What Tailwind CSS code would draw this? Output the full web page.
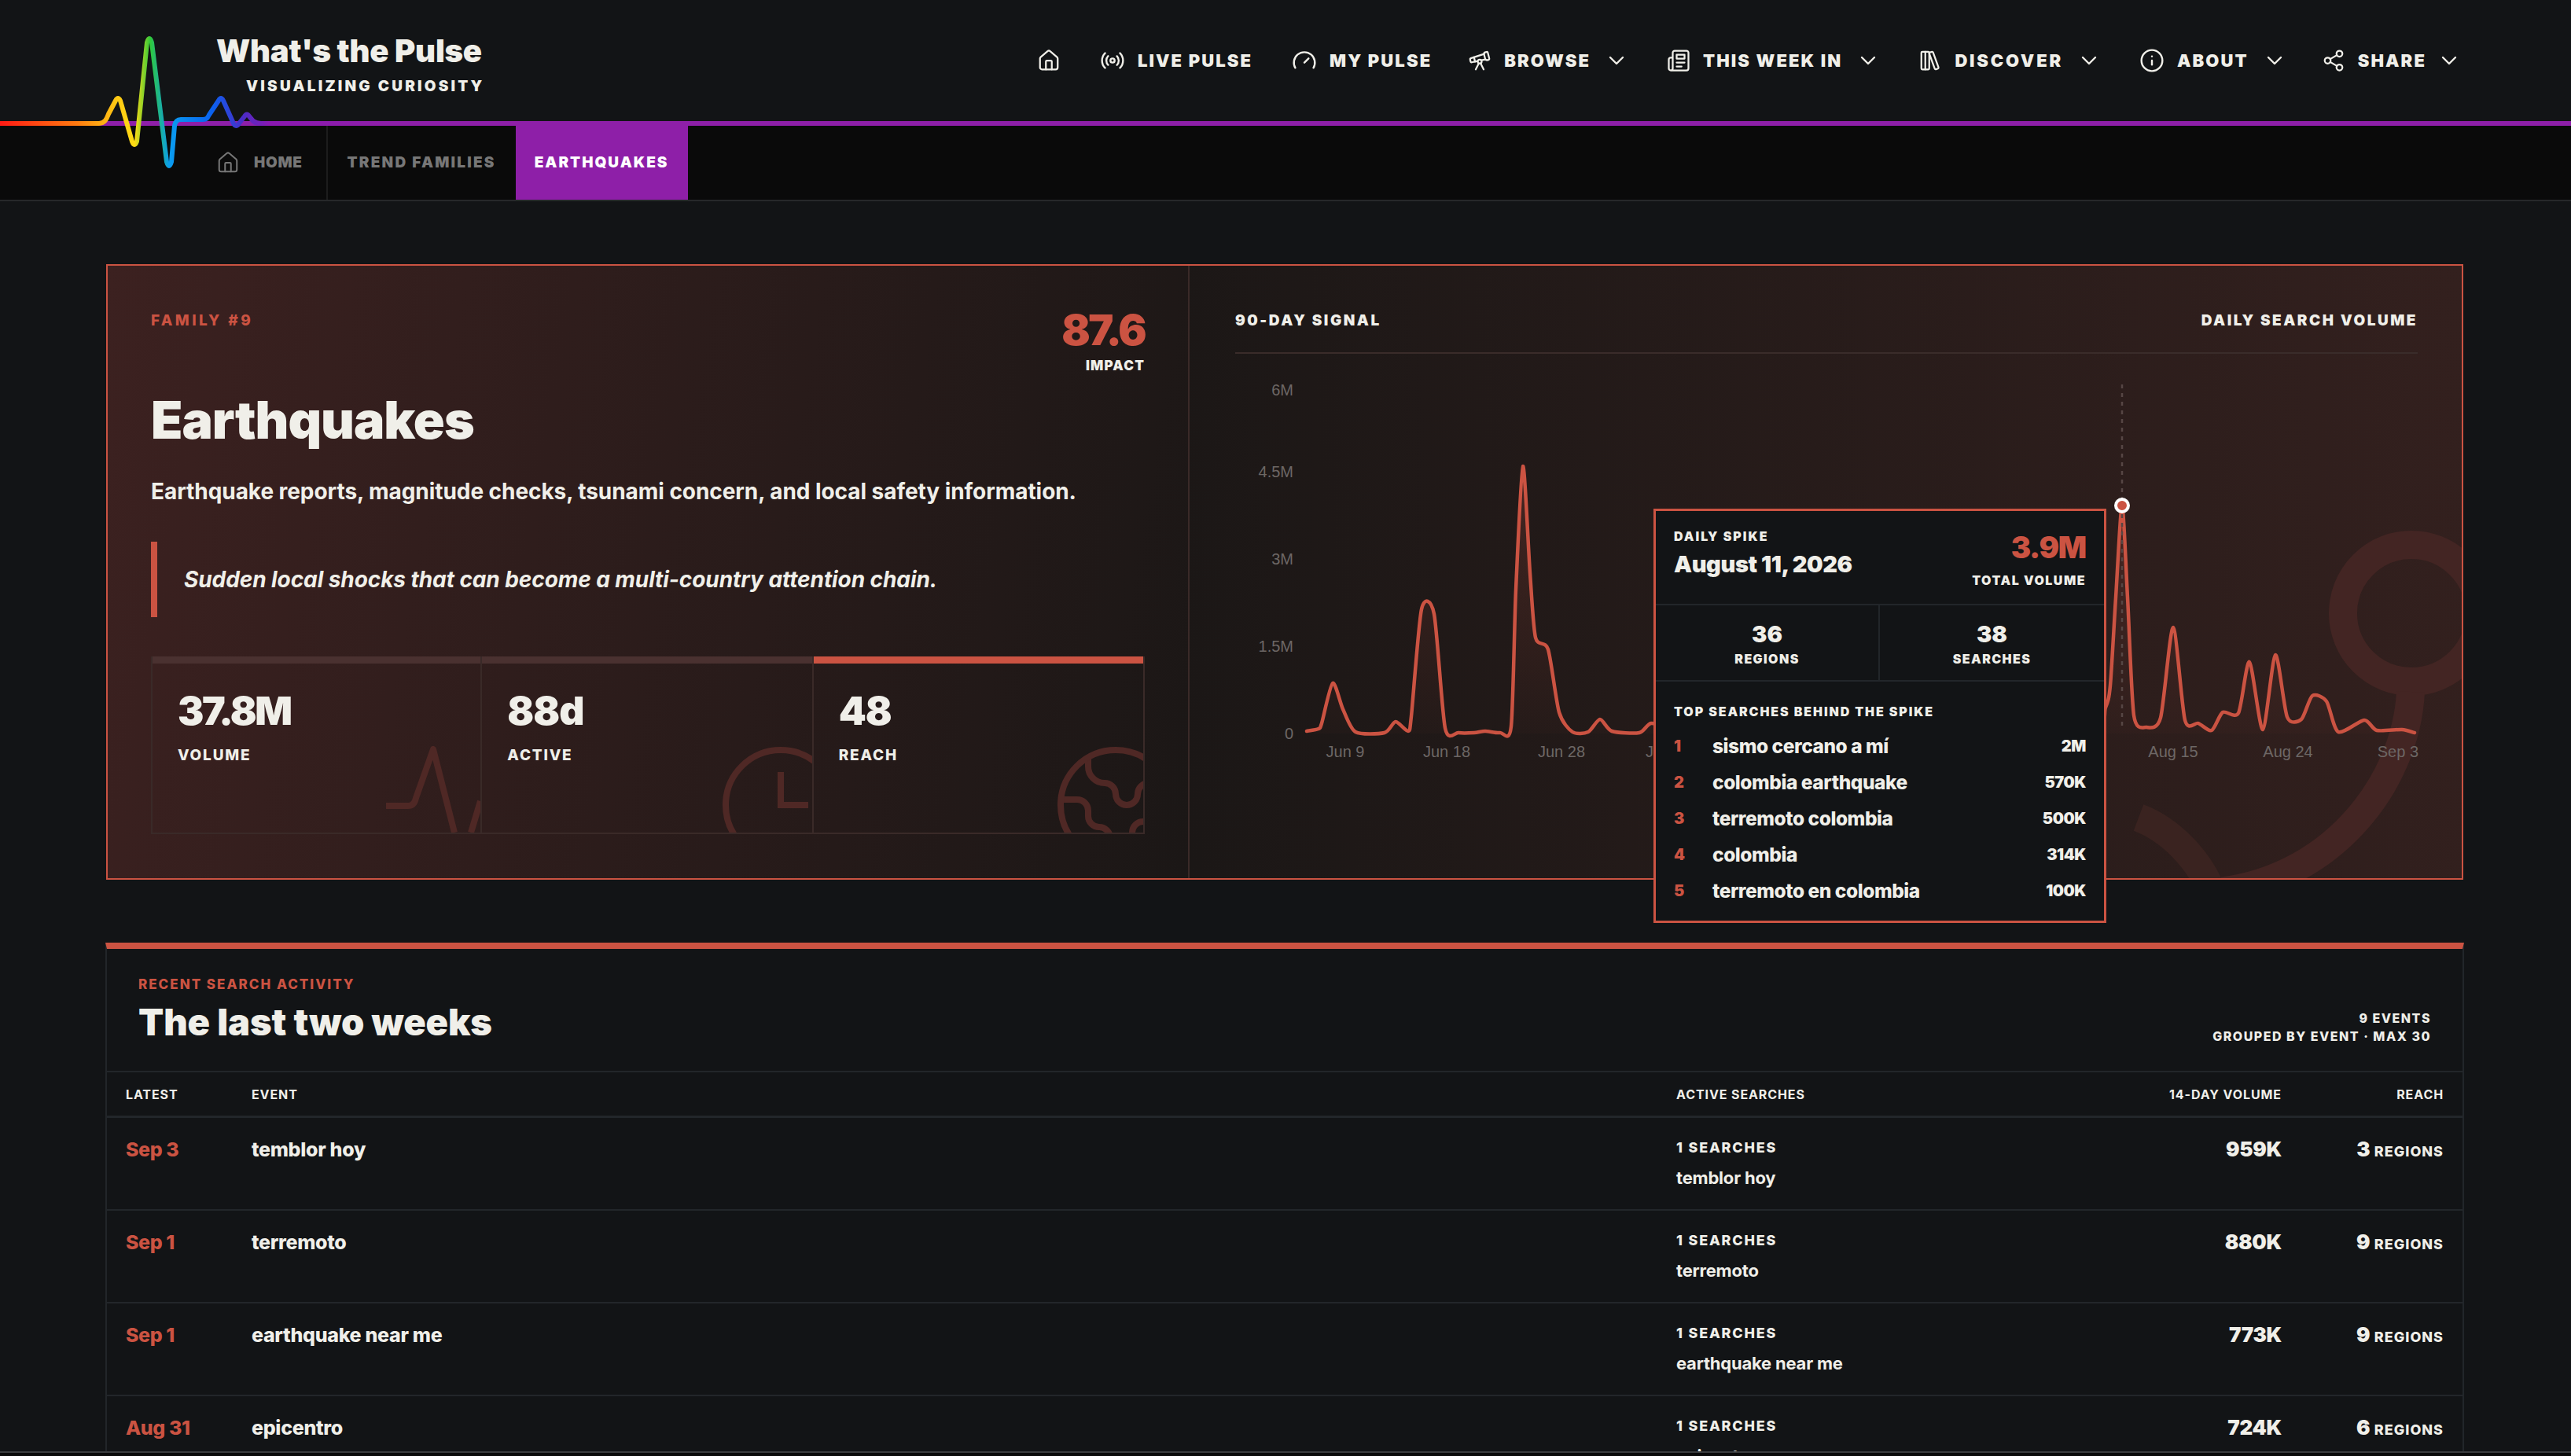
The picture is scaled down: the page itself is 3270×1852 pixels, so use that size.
<!DOCTYPE html>
<html lang="en">
<head>
    <meta charset="UTF-8">
    <meta name="viewport" content="width=device-width, initial-scale=1.0">
    <title>Earthquakes - What's the Pulse</title>
    <script src="https://cdn.jsdelivr.net/npm/@tailwindcss/browser@4"></script>
</head>
<body class="bg-[#121416] text-[#f0efe9] font-['Inter',sans-serif]">
<div class="relative w-[3270px] h-[1852px] overflow-hidden">

    <!-- top nav -->
    <header class="h-[154px] flex justify-between">
        <div class="pl-[275px] pt-[41px]">
            <div class="text-[40px] leading-[48px] font-black tracking-[-0.2px]">What's the Pulse</div>
            <div class="pl-[38px] mt-[9px] text-[19px] leading-[24px] font-black tracking-[3.2px]">VISUALIZING CURIOSITY</div>
        </div>
        <nav class="flex items-center gap-[50px] pr-[139px] text-[22px] font-black tracking-[2.1px]">
            <svg class="w-[30px] h-[30px]" viewBox="0 0 24 24" fill="none" stroke="currentColor" stroke-width="1.8" stroke-linecap="round" stroke-linejoin="round"><path d="M15 21v-8a1 1 0 0 0-1-1h-4a1 1 0 0 0-1 1v8"/><path d="M3 10a2 2 0 0 1 .709-1.528l7-5.999a2 2 0 0 1 2.582 0l7 5.999A2 2 0 0 1 21 10v9a2 2 0 0 1-2 2H5a2 2 0 0 1-2-2z"/></svg>
            <a class="flex items-center gap-[16px]">
                <svg class="w-[32px] h-[32px]" viewBox="0 0 24 24" fill="none" stroke="currentColor" stroke-width="1.8" stroke-linecap="round" stroke-linejoin="round"><path d="M4.9 19.1C1 15.2 1 8.8 4.9 4.9"/><path d="M7.8 16.2c-2.3-2.3-2.3-6.1 0-8.5"/><circle cx="12" cy="12" r="2"/><path d="M16.2 7.8c2.3 2.3 2.3 6.1 0 8.5"/><path d="M19.1 4.9C23 8.8 23 15.1 19.1 19"/></svg>
                LIVE PULSE
            </a>
            <a class="flex items-center gap-[16px] -mr-[4px]">
                <svg class="w-[32px] h-[32px]" viewBox="0 0 24 24" fill="none" stroke="currentColor" stroke-width="1.8" stroke-linecap="round" stroke-linejoin="round"><path d="m12 14 4-4"/><path d="M3.34 19a10 10 0 1 1 17.32 0"/></svg>
                MY PULSE
            </a>
            <a class="flex items-center gap-[16px] -mr-[2px]">
                <svg class="w-[30px] h-[30px]" viewBox="0 0 24 24" fill="none" stroke="currentColor" stroke-width="1.8" stroke-linecap="round" stroke-linejoin="round"><path d="m10.065 12.493-6.18 1.318a.934.934 0 0 1-1.108-.702l-.537-2.15a1.07 1.07 0 0 1 .691-1.265l13.504-4.44"/><path d="m13.56 11.747 4.332-.924"/><path d="m16 21-3.105-6.21"/><path d="M16.485 5.94a2 2 0 0 1 1.455-2.425l1.09-.272a1 1 0 0 1 1.212.727l1.515 6.06a1 1 0 0 1-.727 1.213l-1.09.272a2 2 0 0 1-2.425-1.455z"/><path d="m6.158 8.633 1.114 4.456"/><path d="m8 21 3.105-6.21"/><circle cx="12" cy="13" r="2"/></svg>
                BROWSE
                <svg class="ml-[1px] w-[32px] h-[32px]" viewBox="0 0 24 24" fill="none" stroke="currentColor" stroke-width="1.8" stroke-linecap="round" stroke-linejoin="round"><path d="m6 9 6 6 6-6"/></svg>
            </a>
            <a class="flex items-center gap-[16px] -mr-[2px]">
                <svg class="w-[30px] h-[30px]" viewBox="0 0 24 24" fill="none" stroke="currentColor" stroke-width="1.8" stroke-linecap="round" stroke-linejoin="round"><path d="M4 22h16a2 2 0 0 0 2-2V4a2 2 0 0 0-2-2H8a2 2 0 0 0-2 2v16a2 2 0 0 1-2 2Zm0 0a2 2 0 0 1-2-2v-9c0-1.1.9-2 2-2h2"/><path d="M18 14h-8"/><path d="M15 18h-5"/><path d="M10 6h8v4h-8V6Z"/></svg>
                THIS WEEK IN
                <svg class="ml-[1px] w-[32px] h-[32px]" viewBox="0 0 24 24" fill="none" stroke="currentColor" stroke-width="1.8" stroke-linecap="round" stroke-linejoin="round"><path d="m6 9 6 6 6-6"/></svg>
            </a>
            <a class="flex items-center gap-[16px] -mr-[2px]">
                <svg class="w-[30px] h-[30px]" viewBox="0 0 24 24" fill="none" stroke="currentColor" stroke-width="1.8" stroke-linecap="round" stroke-linejoin="round"><rect width="8" height="18" x="3" y="3" rx="1"/><path d="M7 3v18"/><path d="M20.4 18.9c.2.5-.1 1.1-.6 1.3l-1.9.7c-.5.2-1.1-.1-1.3-.6L11.1 5.1c-.2-.5.1-1.1.6-1.3l1.9-.7c.5-.2 1.1.1 1.3.6Z"/></svg>
                <span class="tracking-[2.8px]">DISCOVER</span>
                <svg class="ml-[1px] w-[32px] h-[32px]" viewBox="0 0 24 24" fill="none" stroke="currentColor" stroke-width="1.8" stroke-linecap="round" stroke-linejoin="round"><path d="m6 9 6 6 6-6"/></svg>
            </a>
            <a class="flex items-center gap-[16px] -mr-[6px]">
                <svg class="w-[32px] h-[32px]" viewBox="0 0 24 24" fill="none" stroke="currentColor" stroke-width="1.8" stroke-linecap="round" stroke-linejoin="round"><circle cx="12" cy="12" r="10"/><path d="M12 16v-4"/><path d="M12 8h.01"/></svg>
                ABOUT
                <svg class="ml-[1px] w-[32px] h-[32px]" viewBox="0 0 24 24" fill="none" stroke="currentColor" stroke-width="1.8" stroke-linecap="round" stroke-linejoin="round"><path d="m6 9 6 6 6-6"/></svg>
            </a>
            <a class="flex items-center gap-[16px]">
                <svg class="w-[30px] h-[30px]" viewBox="0 0 24 24" fill="none" stroke="currentColor" stroke-width="1.8" stroke-linecap="round" stroke-linejoin="round"><circle cx="18" cy="5" r="3"/><circle cx="6" cy="12" r="3"/><circle cx="18" cy="19" r="3"/><path d="m8.59 13.51 6.83 3.98"/><path d="m15.41 6.51-6.82 3.98"/></svg>
                SHARE
                <svg class="-ml-[3px] w-[32px] h-[32px]" viewBox="0 0 24 24" fill="none" stroke="currentColor" stroke-width="1.8" stroke-linecap="round" stroke-linejoin="round"><path d="m6 9 6 6 6-6"/></svg>
            </a>
        </nav>
    </header>
    <div class="h-[6px] bg-[#8e1fa8]"></div>

    <!-- breadcrumbs -->
    <div class="h-[96px] bg-[#0a0a0a] border-b-2 border-[#26282a] flex pl-[275px] text-[19px] font-black tracking-[2px]">
        <a class="flex items-center gap-[18px] pr-[30px] text-[#777] tracking-[0.7px] border-r-2 border-[#1c1c1c]">
            <svg class="w-[30px] h-[30px]" viewBox="0 0 24 24" fill="none" stroke="currentColor" stroke-width="1.6" stroke-linecap="round" stroke-linejoin="round"><path d="M15 21v-8a1 1 0 0 0-1-1h-4a1 1 0 0 0-1 1v8"/><path d="M3 10a2 2 0 0 1 .709-1.528l7-5.999a2 2 0 0 1 2.582 0l7 5.999A2 2 0 0 1 21 10v9a2 2 0 0 1-2 2H5a2 2 0 0 1-2-2z"/></svg>
            HOME
        </a>
        <a class="flex items-center px-[25px] text-[#777] tracking-[2.2px]">TREND FAMILIES</a>
        <a class="flex items-center px-[24px] bg-[#8e1fa8] text-white h-[94px]">EARTHQUAKES</a>
    </div>

    <!-- hero panel -->
    <section class="mt-[80px] ml-[135px] w-[2998px] h-[783px] border-2 border-[#cb5342] flex">
        <div class="relative w-[1376px] px-[55px] pt-[58px] border-r-2 border-[#3a2a28] bg-[linear-gradient(100deg,#3c2120,#1b1716)]">
            <div class="flex justify-between">
                <div class="text-[19px] leading-[24px] font-extrabold tracking-[3.4px] text-[#cb5342]">FAMILY #9</div>
                <div class="text-right">
                    <div class="text-[54px] leading-[48px] font-black tracking-[-2.8px] text-[#cb5342]">87.6</div>
                    <div class="mt-[10px] text-[17px] leading-[22px] font-black tracking-[1.2px]">IMPACT</div>
                </div>
            </div>
            <h1 class="mt-[18px] text-[66px] leading-[80px] font-black tracking-[-1px]">Earthquakes</h1>
            <p class="mt-[33px] text-[28px] leading-[36px] font-bold tracking-[-0.06px]">Earthquake reports, magnitude checks, tsunami concern, and local safety information.</p>
            <blockquote class="mt-[46px] h-[96px] border-l-8 border-[#cb5342] pl-[34px] flex items-center text-[28px] font-bold italic tracking-[-0.08px]">Sudden local shocks that can become a multi-country attention chain.</blockquote>
            <div class="mt-[50px] grid grid-cols-3 h-[226px] border-b-2 border-[#3a2a28]">
                <div class="relative overflow-hidden border-x-2 border-[#3a2a28]">
                    <div class="h-[9px] bg-[#4a3130]"></div>
                    <div class="pl-[32px] pt-[32px] text-[50px] leading-[56px] font-black tracking-[-2.4px]">37.8M</div>
                    <div class="pl-[32px] mt-[17px] text-[19px] leading-[24px] font-extrabold tracking-[1.8px]">VOLUME</div>
                    <svg class="absolute right-0 bottom-0 w-[120px] h-[110px]" viewBox="0 0 120 110" fill="none" stroke="#4f2825" stroke-width="8" stroke-linejoin="round"><path d="M0 76H28Q36 76 38 66L60 4L87 110M108 110L120 70"/></svg>
                </div>
                <div class="relative overflow-hidden border-r-2 border-[#3a2a28]">
                    <div class="h-[9px] bg-[#4a3130]"></div>
                    <div class="pl-[32px] pt-[32px] text-[50px] leading-[56px] font-black tracking-[-1px]">88d</div>
                    <div class="pl-[32px] mt-[17px] text-[19px] leading-[24px] font-extrabold tracking-[1.8px]">ACTIVE</div>
                    <svg class="absolute left-[296px] top-[105px] w-[168px] h-[168px]" viewBox="0 0 24 24" fill="none" stroke="#4f2825" stroke-width="1.15"><circle cx="12" cy="12" r="10"/><path d="M12 6v6h5"/></svg>
                </div>
                <div class="relative overflow-hidden border-r-2 border-[#3a2a28]">
                    <div class="h-[9px] bg-[#cb5342]"></div>
                    <div class="pl-[32px] pt-[32px] text-[50px] leading-[56px] font-black tracking-[-1px]">48</div>
                    <div class="pl-[32px] mt-[17px] text-[19px] leading-[24px] font-extrabold tracking-[1.8px]">REACH</div>
                    <svg class="absolute left-[300px] top-[105px] w-[168px] h-[168px]" viewBox="0 0 24 24" fill="none" stroke="#4f2825" stroke-width="1.15"><path d="M21.54 15H17a2 2 0 0 0-2 2v4.54"/><path d="M7 3.34V5a3 3 0 0 0 3 3a2 2 0 0 1 2 2c0 1.1.9 2 2 2a2 2 0 0 0 2-2c0-1.1.9-2 2-2h3.17"/><path d="M11 21.95V18a2 2 0 0 0-2-2a2 2 0 0 1-2-2v-1a2 2 0 0 0-2-2H2.05"/><circle cx="12" cy="12" r="10"/></svg>
                </div>
            </div>
        </div>
        <div class="relative flex-1 overflow-hidden pl-[58px] pr-[56px] pt-[60px] bg-[linear-gradient(85deg,#1b1716,#33201e)]">
            <!-- big background stethoscope -->
            <svg class="absolute left-0 top-0 w-[1620px] h-[780px]" viewBox="1513 338 1620 780" fill="none" stroke="#432523" stroke-width="36"><circle cx="3067" cy="780" r="87"/><path d="M3066 880C3060 1000 2960 1125 2810 1135"/><path d="M2720 1040C2760 1055 2800 1095 2815 1140" stroke="#3a2320"/></svg>
            <div class="relative flex justify-between h-[52px] border-b-2 border-[#3a2c2a] text-[19px] leading-[20px] font-black tracking-[2.5px]">
                <div>90-DAY SIGNAL</div>
                <div>DAILY SEARCH VOLUME</div>
            </div>
            <!-- viewBox is in page coordinates, easier to line up with the labels -->
            <svg class="relative -ml-[58px] w-[1620px] h-[560px]" viewBox="1513 450 1620 560" fill="none">
                <defs>
                    <linearGradient id="areaFill" x1="0" y1="0" x2="0" y2="1"><stop offset="0" stop-color="#cb5342" stop-opacity="0.2"/><stop offset="1" stop-color="#cb5342" stop-opacity="0.02"/></linearGradient>
                </defs>
                <g font-family="Liberation Sans" font-size="20" fill="#6d6765">
                    <text x="1645" y="503" text-anchor="end">6M</text>
                    <text x="1645" y="607" text-anchor="end">4.5M</text>
                    <text x="1645" y="718" text-anchor="end">3M</text>
                    <text x="1645" y="829" text-anchor="end">1.5M</text>
                    <text x="1645" y="940" text-anchor="end">0</text>
                    <text x="1711" y="963" text-anchor="middle">Jun 9</text>
                    <text x="1840" y="963" text-anchor="middle">Jun 18</text>
                    <text x="1986" y="963" text-anchor="middle">Jun 28</text>
                    <text x="2093" y="963">Jul</text>
                    <text x="2764" y="963" text-anchor="middle">Aug 15</text>
                    <text x="2910" y="963" text-anchor="middle">Aug 24</text>
                    <text x="3076" y="963" text-anchor="end">Sep 3</text>
                </g>
                <path id="sparkArea" fill="url(#areaFill)"/>
                <path id="sparkLine" stroke="#cb5342" stroke-width="4.5" stroke-linejoin="round" stroke-linecap="round"/>
                <path d="M2699 489V927" stroke="#564644" stroke-width="2.5" stroke-dasharray="5 6"/>
                <circle cx="2699" cy="643" r="8" fill="#cb5342" stroke="#fff" stroke-width="4"/>
            </svg>
        </div>
    </section>

    <!-- spike tooltip -->
    <div class="absolute left-[2103px] top-[647px] w-[576px] h-[527px] bg-[#121416] border-[3px] border-[#cb5342]">
        <div class="h-[120px] border-b-2 border-[#22262a] px-[23px] pt-[21px] flex justify-between">
            <div>
                <div class="text-[16px] leading-[22px] font-black tracking-[2px]">DAILY SPIKE</div>
                <div class="mt-[7px] text-[29px] leading-[36px] font-black tracking-[-0.4px]">August 11, 2026</div>
            </div>
            <div class="text-right">
                <div class="mt-[6px] text-[38px] leading-[38px] font-black tracking-[-1.2px] text-[#cb5342]">3.9M</div>
                <div class="mt-[13px] text-[16px] leading-[20px] font-black tracking-[1.5px]">TOTAL VOLUME</div>
            </div>
        </div>
        <div class="h-[97px] border-b-2 border-[#22262a] grid grid-cols-2 text-center">
            <div class="border-r-2 border-[#22262a] pt-[20px]">
                <div class="text-[29px] leading-[34px] font-black">36</div>
                <div class="mt-[4px] text-[16px] leading-[20px] font-black tracking-[1.4px]">REGIONS</div>
            </div>
            <div class="pt-[20px]">
                <div class="text-[29px] leading-[34px] font-black">38</div>
                <div class="mt-[4px] text-[16px] leading-[20px] font-black tracking-[1.4px]">SEARCHES</div>
            </div>
        </div>
        <div class="px-[23px] pt-[28px]">
            <div class="text-[16px] leading-[20px] font-black tracking-[1.9px]">TOP SEARCHES BEHIND THE SPIKE</div>
            <div class="mt-[11px] flex flex-col text-[24.5px] font-extrabold tracking-[-0.45px]">
                <div class="h-[46px] flex items-center"><span class="w-[49px] text-[20px] font-black text-[#cb5342]">1</span>sismo cercano a mí<span class="ml-auto text-[20px] font-black">2M</span></div>
                <div class="h-[46px] flex items-center"><span class="w-[49px] text-[20px] font-black text-[#cb5342]">2</span>colombia earthquake<span class="ml-auto text-[20px] font-black">570K</span></div>
                <div class="h-[46px] flex items-center"><span class="w-[49px] text-[20px] font-black text-[#cb5342]">3</span>terremoto colombia<span class="ml-auto text-[20px] font-black">500K</span></div>
                <div class="h-[46px] flex items-center"><span class="w-[49px] text-[20px] font-black text-[#cb5342]">4</span>colombia<span class="ml-auto text-[20px] font-black">314K</span></div>
                <div class="h-[46px] flex items-center"><span class="w-[49px] text-[20px] font-black text-[#cb5342]">5</span>terremoto en colombia<span class="ml-auto text-[20px] font-black">100K</span></div>
            </div>
        </div>
    </div>

    <!-- recent activity -->
    <section class="mt-[80px] ml-[134px] w-[3000px] border-x-2 border-t-8 border-x-[#22262a] border-t-[#cb5342]">
        <div class="h-[157px] border-b-2 border-[#22262a] px-[40px] pt-[34px] flex justify-between">
            <div>
                <div class="text-[17px] leading-[22px] font-extrabold tracking-[2px] text-[#cb5342]">RECENT SEARCH ACTIVITY</div>
                <h2 class="mt-[10px] text-[47px] leading-[54px] font-black tracking-[-0.1px]">The last two weeks</h2>
            </div>
            <div class="pt-[43px] text-right text-[16px] leading-[23px] font-extrabold tracking-[1.5px]">
                <div>9 EVENTS</div>
                <div>GROUPED BY EVENT · MAX 30</div>
            </div>
        </div>
        <div class="h-[58px] border-b-[3px] border-[#22262a] grid grid-cols-[160px_1812px_1fr_206px_206px] items-center px-[24px] text-[16px] font-bold tracking-[0.9px]">
            <div>LATEST</div><div>EVENT</div><div>ACTIVE SEARCHES</div><div class="text-right">14-DAY VOLUME</div><div class="text-right">REACH</div>
        </div>
        <div class="h-[118px] border-b-2 border-[#22262a] grid grid-cols-[160px_1812px_1fr_206px_206px] px-[24px] pt-[25px]">
            <div class="text-[25px] leading-[30px] font-extrabold tracking-[-0.4px] text-[#cb5342]">Sep 3</div>
            <div class="text-[25px] leading-[30px] font-extrabold tracking-[-0.3px]">temblor hoy</div>
            <div>
                <div class="text-[18px] leading-[26px] font-extrabold tracking-[1.8px]">1 SEARCHES</div>
                <div class="mt-[11px] text-[22px] leading-[28px] font-bold tracking-[-0.2px]">temblor hoy</div>
            </div>
            <div class="text-right text-[26px] leading-[30px] font-black tracking-[-0.3px]">959K</div>
            <div class="text-right text-[26px] leading-[30px] font-black">3 <span class="text-[18px] font-extrabold tracking-[1px]">REGIONS</span></div>
        </div>
        <div class="h-[118px] border-b-2 border-[#22262a] grid grid-cols-[160px_1812px_1fr_206px_206px] px-[24px] pt-[25px]">
            <div class="text-[25px] leading-[30px] font-extrabold tracking-[-0.4px] text-[#cb5342]">Sep 1</div>
            <div class="text-[25px] leading-[30px] font-extrabold tracking-[-0.3px]">terremoto</div>
            <div>
                <div class="text-[18px] leading-[26px] font-extrabold tracking-[1.8px]">1 SEARCHES</div>
                <div class="mt-[11px] text-[22px] leading-[28px] font-bold tracking-[-0.2px]">terremoto</div>
            </div>
            <div class="text-right text-[26px] leading-[30px] font-black tracking-[-0.3px]">880K</div>
            <div class="text-right text-[26px] leading-[30px] font-black">9 <span class="text-[18px] font-extrabold tracking-[1px]">REGIONS</span></div>
        </div>
        <div class="h-[118px] border-b-2 border-[#22262a] grid grid-cols-[160px_1812px_1fr_206px_206px] px-[24px] pt-[25px]">
            <div class="text-[25px] leading-[30px] font-extrabold tracking-[-0.4px] text-[#cb5342]">Sep 1</div>
            <div class="text-[25px] leading-[30px] font-extrabold tracking-[-0.3px]">earthquake near me</div>
            <div>
                <div class="text-[18px] leading-[26px] font-extrabold tracking-[1.8px]">1 SEARCHES</div>
                <div class="mt-[11px] text-[22px] leading-[28px] font-bold tracking-[-0.2px]">earthquake near me</div>
            </div>
            <div class="text-right text-[26px] leading-[30px] font-black tracking-[-0.3px]">773K</div>
            <div class="text-right text-[26px] leading-[30px] font-black">9 <span class="text-[18px] font-extrabold tracking-[1px]">REGIONS</span></div>
        </div>
        <div class="h-[118px] grid grid-cols-[160px_1812px_1fr_206px_206px] px-[24px] pt-[25px]">
            <div class="text-[25px] leading-[30px] font-extrabold tracking-[-0.4px] text-[#cb5342]">Aug 31</div>
            <div class="text-[25px] leading-[30px] font-extrabold tracking-[-0.3px]">epicentro</div>
            <div>
                <div class="text-[18px] leading-[26px] font-extrabold tracking-[1.8px]">1 SEARCHES</div>
                <div class="mt-[11px] text-[22px] leading-[28px] font-bold tracking-[-0.2px]">epicentro</div>
            </div>
            <div class="text-right text-[26px] leading-[30px] font-black tracking-[-0.3px]">724K</div>
            <div class="text-right text-[26px] leading-[30px] font-black">6 <span class="text-[18px] font-extrabold tracking-[1px]">REGIONS</span></div>
        </div>
    </section>

    <!-- bottom bar sits over the scrolled content -->
    <div class="absolute left-0 right-0 bottom-0 h-[6px] bg-[#0a0a0a] border-t-2 border-[#3a3c3e]"></div>

    <!-- logo pulse, crosses the header and breadcrumbs -->
    <svg class="absolute left-0 top-0 w-[500px] h-[220px]" viewBox="0 0 500 220" fill="none">
        <defs>
            <linearGradient id="pulseGrad" gradientUnits="userSpaceOnUse" x1="0" y1="0" x2="490" y2="0">
                <stop offset="0" stop-color="#ff1a14"/>
                <stop offset="0.2" stop-color="#ff7a10"/>
                <stop offset="0.3" stop-color="#ffc814"/>
                <stop offset="0.35" stop-color="#ffdc14"/>
                <stop offset="0.39" stop-color="#2fc93a"/>
                <stop offset="0.44" stop-color="#0a9cf0"/>
                <stop offset="0.55" stop-color="#0a62f0"/>
                <stop offset="0.63" stop-color="#4a2cc8"/>
                <stop offset="0.7" stop-color="#8a18b0"/>
                <stop offset="1" stop-color="#8e1fa8"/>
            </linearGradient>
        </defs>
        <path stroke="url(#pulseGrad)" stroke-width="6" stroke-linecap="round" stroke-linejoin="round" d="M0 157H126C134 157 136 150 138 145L147 128Q150 122 153 128L168 180Q171 188 174 180L187 54Q190 44 193 54L212 206Q215 216 218 206L222 160C223 154 226 152 230 152H258C263 152 264 150 266 146L278 128Q281 122 284 128L297 157Q300 163 304 157L311 148Q314 143 317 148L322 154C326 157 328 157 332 157H490"/>
    </svg>
</div>

<script>
    const points = [[1662,930],[1677,927],[1681,920],[1695,869],[1708,902],[1724,931],[1761,932],[1775,918],[1791,930],[1795,911],[1808,775],[1824,781],[1838,926],[1855,932],[1875,932],[1889,930],[1908,932],[1922,924],[1928,750],[1937,593],[1946,729],[1953,811],[1969,826],[1983,906],[2000,931],[2020,931],[2035,915],[2050,930],[2085,932],[2100,920],[2130,925],[2300,930],[2500,930],[2660,930],[2678,900],[2684,872],[2691,760],[2699,643],[2706,760],[2714,910],[2730,925],[2748,913],[2764,798],[2779,916],[2796,920],[2813,929],[2827,906],[2847,907],[2861,842],[2878,928],[2894,833],[2909,912],[2927,915],[2941,885],[2959,892],[2974,931],[3007,916],[3023,929],[3055,928],[3071,932]];

    function smoothPath(pts) {
        let d = 'M' + pts[0][0] + ' ' + pts[0][1];
        for (let i = 0; i < pts.length - 1; i++) {
            const p0 = pts[i - 1] || pts[i];
            const p1 = pts[i];
            const p2 = pts[i + 1];
            const p3 = pts[i + 2] || p2;
            const c1x = p1[0] + (p2[0] - p0[0]) / 8;
            const c1y = p1[1] + (p2[1] - p0[1]) / 8;
            const c2x = p2[0] - (p3[0] - p1[0]) / 8;
            const c2y = p2[1] - (p3[1] - p1[1]) / 8;
            d += ' C' + c1x + ' ' + c1y + ' ' + c2x + ' ' + c2y + ' ' + p2[0] + ' ' + p2[1];
        }
        return d;
    }

    const line = smoothPath(points);
    document.getElementById('sparkLine').setAttribute('d', line);
    document.getElementById('sparkArea').setAttribute('d', line + ' L3071 933 L1662 933 Z');
</script>
</body>
</html>
